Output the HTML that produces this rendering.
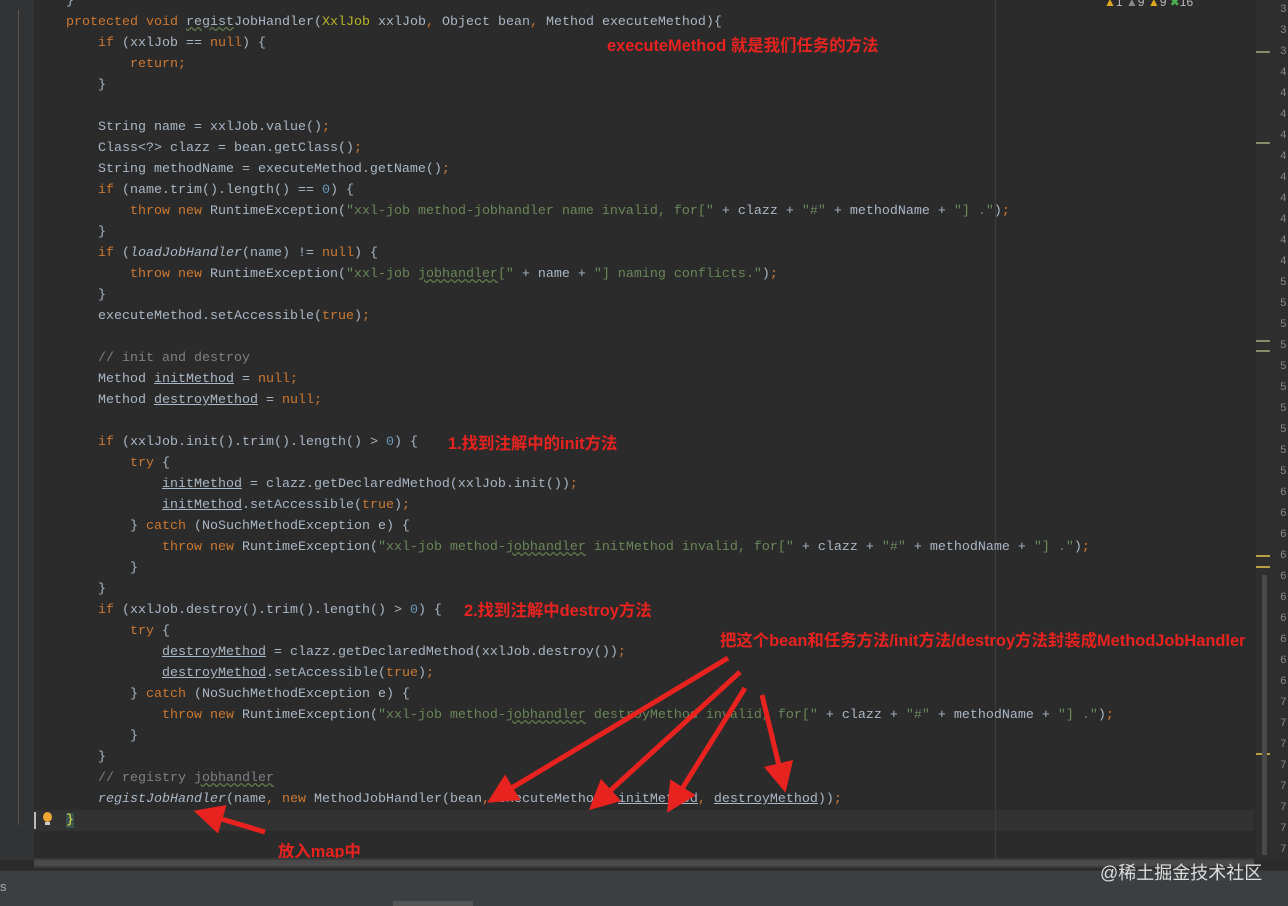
<!DOCTYPE html>
<html><head><meta charset="utf-8"><style>
body{margin:0;width:1288px;height:905px;overflow:hidden;background:#2b2b2b;position:relative;font-family:"Liberation Mono",monospace;}
.gut{position:absolute;left:0;top:0;width:34px;height:860px;background:#313335;}
.gline{position:absolute;left:18px;top:10px;width:1px;height:815px;background:#555;}
.code{position:absolute;left:66px;top:-9px;font-size:13.33px;line-height:21px;color:#a9b7c6;white-space:pre;}
.k{color:#cc7832}.s{color:#6a8759}.c{color:#808080}.y{color:#bbb529}.i{font-style:italic}.u{text-decoration:underline}
.w{text-decoration:underline wavy #5c7a4a}
.cur{position:absolute;left:34px;top:810px;width:1220px;height:21px;background:#323232;}
.margin{position:absolute;left:995px;top:0;width:1px;height:860px;background:#3d3d3d;}
.rp{position:absolute;left:1256px;top:0;width:32px;height:860px;background:#2e2e2e;color:#888;font-size:11px;line-height:21px;padding-left:24px;box-sizing:border-box;}
.red{position:absolute;color:#e8231f;font-family:"Liberation Sans","Noto Sans CJK SC",sans-serif;font-weight:bold;font-size:16.4px;white-space:nowrap;}
.hs{position:absolute;left:34px;top:858px;width:1220px;height:10px;background:#3a3a3a;}
.hs i{position:absolute;left:0;top:2px;width:1220px;height:6px;background:#4a4a4a;}
.sb{position:absolute;left:0;top:870px;width:1288px;height:35px;background:#3c3f41;border-top:1px solid #323232;color:#aaa;font-family:"Liberation Sans",sans-serif;font-size:13px;}
.mk{position:absolute;left:1256px;width:14px;height:2px;background:#8a8a6a;}
</style></head><body>
<div class="gut"></div><div class="gline"></div>
<div class="cur"></div>
<div class="margin"></div>
<div class="code"><span>}</span>
<span class="k">protected void </span><span class="w">regist</span>JobHandler(<span class="y">XxlJob</span> xxlJob<span class="k">, </span>Object bean<span class="k">, </span>Method executeMethod){
    <span class="k">if </span>(xxlJob == <span class="k">null</span>) {
        <span class="k">return;</span>
    }

    String name = xxlJob.value()<span class="k">;</span>
    Class&lt;?&gt; clazz = bean.getClass()<span class="k">;</span>
    String methodName = executeMethod.getName()<span class="k">;</span>
    <span class="k">if </span>(name.trim().length() == <span class="s" style="color:#6897bb">0</span>) {
        <span class="k">throw new </span>RuntimeException(<span class="s">"xxl-job method-jobhandler name invalid, for["</span> + clazz + <span class="s">"#"</span> + methodName + <span class="s">"] ."</span>)<span class="k">;</span>
    }
    <span class="k">if </span>(<span class="i">loadJobHandler</span>(name) != <span class="k">null</span>) {
        <span class="k">throw new </span>RuntimeException(<span class="s">"xxl-job <span class="w">jobhandler</span>["</span> + name + <span class="s">"] naming conflicts."</span>)<span class="k">;</span>
    }
    executeMethod.setAccessible(<span class="k">true</span>)<span class="k">;</span>

    <span class="c">// init and destroy</span>
    Method <span class="u">initMethod</span> = <span class="k">null;</span>
    Method <span class="u">destroyMethod</span> = <span class="k">null;</span>

    <span class="k">if </span>(xxlJob.init().trim().length() &gt; <span style="color:#6897bb">0</span>) {
        <span class="k">try </span>{
            <span class="u">initMethod</span> = clazz.getDeclaredMethod(xxlJob.init())<span class="k">;</span>
            <span class="u">initMethod</span>.setAccessible(<span class="k">true</span>)<span class="k">;</span>
        } <span class="k">catch </span>(NoSuchMethodException e) {
            <span class="k">throw new </span>RuntimeException(<span class="s">"xxl-job method-<span class="w">jobhandler</span> initMethod invalid, for["</span> + clazz + <span class="s">"#"</span> + methodName + <span class="s">"] ."</span>)<span class="k">;</span>
        }
    }
    <span class="k">if </span>(xxlJob.destroy().trim().length() &gt; <span style="color:#6897bb">0</span>) {
        <span class="k">try </span>{
            <span class="u">destroyMethod</span> = clazz.getDeclaredMethod(xxlJob.destroy())<span class="k">;</span>
            <span class="u">destroyMethod</span>.setAccessible(<span class="k">true</span>)<span class="k">;</span>
        } <span class="k">catch </span>(NoSuchMethodException e) {
            <span class="k">throw new </span>RuntimeException(<span class="s">"xxl-job method-<span class="w">jobhandler</span> destroyMethod invalid, for["</span> + clazz + <span class="s">"#"</span> + methodName + <span class="s">"] ."</span>)<span class="k">;</span>
        }
    }
    <span class="c">// registry <span class="w">jobhandler</span></span>
    <span class="i">registJobHandler</span>(name<span class="k">, new </span>MethodJobHandler(bean<span class="k">, </span>executeMethod<span class="k">, </span><span class="u">initMethod</span><span class="k">, </span><span class="u">destroyMethod</span>))<span class="k">;</span>
<span style="color:#e8e84a;background:#3b514d">}</span></div>
<div style="position:absolute;left:34px;top:812px;width:2px;height:17px;background:#bbb"></div>
<div style="position:absolute;left:43px;top:812px;width:9px;height:10px;border-radius:50%;background:#f0a732"></div>
<div style="position:absolute;left:45px;top:822px;width:5px;height:3px;background:#ccc"></div>
<div class="rp">3<br>3<br>3<br>4<br>4<br>4<br>4<br>4<br>4<br>4<br>4<br>4<br>4<br>5<br>5<br>5<br>5<br>5<br>5<br>5<br>5<br>5<br>5<br>6<br>6<br>6<br>6<br>6<br>6<br>6<br>6<br>6<br>6<br>7<br>7<br>7<br>7<br>7<br>7<br>7<br>7</div>
<div class="mk" style="top:51px"></div><div class="mk" style="top:142px"></div>
<div class="mk" style="top:340px"></div><div class="mk" style="top:350px"></div>
<div class="mk" style="top:555px;background:#b8a040"></div><div class="mk" style="top:566px;background:#b8a040"></div>
<div class="mk" style="top:753px;background:#b8a040"></div>
<div style="position:absolute;left:1262px;top:575px;width:5px;height:280px;background:#4a4a4a"></div>
<div style="position:absolute;left:1104px;top:-5px;color:#bbb;font-family:'Liberation Sans',sans-serif;font-size:12px"><span style="color:#e0a920">▲</span>1 <span style="color:#888">▲</span>9 <span style="color:#e0a920">▲</span>9 <span style="color:#4caf50">✖</span>16</div>
<div class="red" style="left:607px;top:32px">executeMethod 就是我们任务的方法</div>
<div class="red" style="left:448px;top:430px">1.找到注解中的init方法</div>
<div class="red" style="left:464px;top:597px">2.找到注解中destroy方法</div>
<div class="red" style="left:720px;top:627px">把这个bean和任务方法/init方法/destroy方法封装成MethodJobHandler</div>
<div class="red" style="left:278px;top:838px">放入map中</div>
<svg style="position:absolute;left:0;top:0" width="1288" height="905">
<defs><marker id="a" markerWidth="6" markerHeight="6" refX="3" refY="3" orient="auto" markerUnits="strokeWidth"><path d="M0,0 L6,3 L0,6 z" fill="#e8231f"/></marker></defs>
<g stroke="#e8231f" stroke-width="5" fill="none" marker-end="url(#a)">
<line x1="728" y1="658" x2="500" y2="795"/>
<line x1="740" y1="672" x2="600" y2="800"/>
<line x1="745" y1="688" x2="675" y2="800"/>
<line x1="762" y1="695" x2="782" y2="778"/>
<line x1="265" y1="832" x2="208" y2="815"/>
</g></svg>
<div class="hs"><i></i></div>
<div class="sb"><span style="position:absolute;left:0;top:8px">s</span>
<span style="position:absolute;left:1100px;top:-12px;color:#ddd;font-size:18px;font-family:'Liberation Sans','Noto Sans CJK SC',sans-serif">@稀土掘金技术社区</span>
<div style="position:absolute;left:393px;top:30px;width:80px;height:5px;background:#555"></div></div>
</body></html>
